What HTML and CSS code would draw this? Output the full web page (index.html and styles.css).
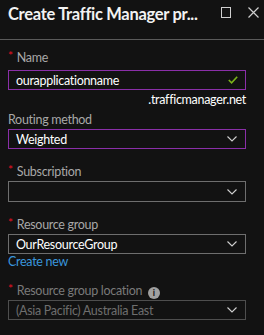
FILE: index.html
```html
<!DOCTYPE html>
<html lang="en">

<head>
    <meta charset="UTF-8">
    <title>Create Traffic Manager profile</title>
    <link rel="stylesheet" href="styles.css">
</head>

<body>

    <div class="header">
        <div class="title">Create Traffic Manager pr...</div>
        <div class="icons">
            <svg width="11" height="11" viewBox="0 0 11 11"><rect x="0.5" y="0.5" width="9" height="10" fill="none" stroke="#cfcfcf" stroke-width="1"/></svg>
            <svg width="11" height="11" viewBox="0 0 11 11"><path d="M0.5 0.5 L10.5 10.5 M10.5 0.5 L0.5 10.5" stroke="#cfcfcf" stroke-width="1.2"/></svg>
        </div>
    </div>

    <div class="form">
        <div class="label first"><span class="star">*</span>Name</div>
        <div class="box active">
            <span class="value">ourapplicationname</span>
            <svg width="10" height="8" viewBox="0 0 10 8"><path d="M0.8 4 L3.6 6.8 L9.2 0.8" fill="none" stroke="#7bb31a" stroke-width="1.6"/></svg>
        </div>
        <div class="suffix">.trafficmanager.net</div>

        <div class="label tight">Routing method</div>
        <div class="box active">
            <span class="value">Weighted</span>
            <svg class="chev" width="10" height="6" viewBox="0 0 10 6"><path d="M0.5 0.5 L5 5 L9.5 0.5" fill="none" stroke="#d0d0d0" stroke-width="1.1"/></svg>
        </div>

        <div class="label"><span class="star">*</span>Subscription</div>
        <div class="box tall">
            <span class="value"></span>
            <svg class="chev" width="10" height="6" viewBox="0 0 10 6"><path d="M0.5 0.5 L5 5 L9.5 0.5" fill="none" stroke="#d0d0d0" stroke-width="1.1"/></svg>
        </div>

        <div class="label"><span class="star">*</span>Resource group</div>
        <div class="box">
            <span class="value">OurResourceGroup</span>
            <svg class="chev" width="10" height="6" viewBox="0 0 10 6"><path d="M0.5 0.5 L5 5 L9.5 0.5" fill="none" stroke="#d0d0d0" stroke-width="1.1"/></svg>
        </div>
        <a class="link" href="#">Create new</a>

        <div class="label dim"><span class="star">*</span>Resource group location <span class="info">i</span></div>
        <div class="box disabled">
            <span class="value">(Asia Pacific) Australia East</span>
            <svg class="chev" width="10" height="6" viewBox="0 0 10 6"><path d="M0.5 0.5 L5 5 L9.5 0.5" fill="none" stroke="#d0d0d0" stroke-width="1.1"/></svg>
        </div>
    </div>

</body>

</html>
```

FILE: styles.css
```css
body {
    margin: 0;
    background-color: #121212;
    font-family: Lato, "Open Sans", sans-serif;
    color: #ffffff;
    width: 264px;
    height: 335px;
    overflow: hidden;
}

.header {
    height: 39px;
    border-bottom: 1px solid #5a5a5a;
    display: flex;
    align-items: flex-start;
}

.title {
    flex: 1;
    font-size: 16.5px;
    font-weight: 700;
    letter-spacing: -0.3px;
    color: #f2f2f2;
    padding-left: 8px;
    padding-top: 4px;
    white-space: nowrap;
}

.icons {
    display: flex;
    gap: 16px;
    padding-top: 7px;
    padding-right: 5px;
}

.form {
    padding: 0 18px 0 8px;
}

.label {
    font-size: 12.5px;
    letter-spacing: -0.3px;
    color: #a8a8a8;
    height: 16px;
    line-height: 16px;
    margin-top: 15px;
    margin-bottom: 1px;
    white-space: nowrap;
}

.label.first {
    margin-top: 10px;
    margin-bottom: 4px;
}

.label.tight {
    margin-top: 3px;
}

.label.dim {
    color: #7a7a7a;
    margin-top: 13px;
}

.star {
    color: #e81123;
    font-size: 12px;
    margin-right: 4px;
    position: relative;
    top: -2px;
}

.info {
    display: inline-block;
    width: 12px;
    height: 12px;
    border-radius: 50%;
    background-color: #a0a0a0;
    color: #121212;
    font-size: 9px;
    font-weight: 700;
    line-height: 12px;
    text-align: center;
    margin-left: 3px;
    vertical-align: -1px;
    letter-spacing: 0;
}

.box {
    height: 18px;
    border: 1px solid #6e6e6e;
    display: flex;
    align-items: center;
    justify-content: space-between;
    padding: 0 7px 0 7px;
    font-size: 12.5px;
    letter-spacing: -0.3px;
}

.box.tall {
    height: 19px;
}

.box.active {
    border-color: #8a2fa8;
}

.box.disabled {
    border-color: #4e4e4e;
    color: #6e6e6e;
}

.value {
    white-space: nowrap;
}

.chev {
    margin-right: 1px;
}

.suffix {
    font-size: 12.5px;
    letter-spacing: -0.3px;
    text-align: right;
    height: 19px;
    line-height: 20px;
}

.link {
    display: block;
    color: #3a96dd;
    font-size: 12.5px;
    letter-spacing: -0.3px;
    text-decoration: none;
    height: 16px;
    line-height: 16px;
}
```
